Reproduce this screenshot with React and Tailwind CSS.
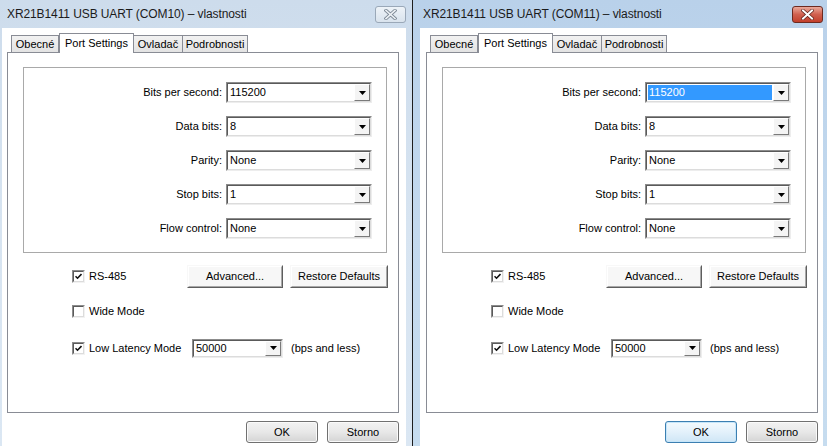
import React from 'react';

const TABS = ['Obecné', 'Port Settings', 'Ovladač', 'Podrobnosti'];
const TAB_W = ['w-[48px]', 'w-[75px]', 'w-[50px]', 'w-[66px]'];

const FIELDS = [
    { label: 'Bits per second:', value: '115200' },
    { label: 'Data bits:', value: '8' },
    { label: 'Parity:', value: 'None' },
    { label: 'Stop bits:', value: '1' },
    { label: 'Flow control:', value: 'None' },
];

const Checkbox = ({ checked }) => (
    <span className="w-[13px] h-[13px] shrink-0 border border-t-[#8c8c8c] border-l-[#8c8c8c] border-r-[#f2f2f2] border-b-[#f2f2f2] bg-white">
        <span className="flex w-full h-full items-center justify-center border border-t-[#5a5a5a] border-l-[#5a5a5a] border-r-[#dcdcdc] border-b-[#dcdcdc]">
            {checked && (
                <svg width="7" height="7" viewBox="0 0 7 7">
                    <path d="M0.5 3.2 L2.5 5.2 L6.5 1" fill="none" stroke="#111" strokeWidth="1.6" />
                </svg>
            )}
        </span>
    </span>
);

const Combo = ({ value, width, height, selected }) => (
    <div className={`flex ${width} ${height} border border-t-[#8c8c8c] border-l-[#8c8c8c] border-r-[#ededed] border-b-[#ededed] bg-white`}>
        <div className="flex flex-1 border border-t-[#5a5a5a] border-l-[#5a5a5a] border-r-[#dcdcdc] border-b-[#dcdcdc]">
            <div className="flex flex-1 items-center pl-[1px] pr-[1px]">
                <span className={selected ? 'flex-1 bg-[#3399ff] text-white pl-[1px] leading-[15px]' : 'pl-[1px]'}>{value}</span>
            </div>
            <div className="flex w-[16px] items-center justify-center bg-[#f4f4f4] border border-t-white border-l-white border-r-[#7a7a7a] border-b-[#7a7a7a]">
                <svg width="7" height="4" viewBox="0 0 7 4">
                    <path d="M0 0 H7 L3.5 4 Z" fill="#000" />
                </svg>
            </div>
        </div>
    </div>
);

const ClassicButton = ({ children, width }) => (
    <div className={`flex ${width} h-[23px] items-center justify-center bg-[#f7f7f7] border border-t-[#f8f8f8] border-l-[#f8f8f8] border-r-[#5e5e5e] border-b-[#5e5e5e]`}>
        <div className="flex w-full h-full items-center justify-center border border-t-white border-l-white border-r-[#a8a8a8] border-b-[#a8a8a8]">
            {children}
        </div>
    </div>
);

const ThemedButton = ({ children, focused }) => (
    <div
        className={
            focused
                ? 'flex w-[72px] h-[22px] items-center justify-center rounded-[3px] border border-[#3c7fb1] bg-gradient-to-b from-[#f4fafd] via-[#e3f1fb] to-[#cfe6f6] shadow-[inset_0_0_0_1px_#c6e6fa]'
                : 'flex w-[72px] h-[22px] items-center justify-center rounded-[3px] border border-[#707070] bg-gradient-to-b from-[#f2f2f2] via-[#e8e8e8] to-[#d4d4d4] shadow-[inset_0_0_0_1px_#fafafa]'
        }
    >
        {children}
    </div>
);

const CloseButton = ({ active }) =>
    active ? (
        <div className="flex w-[31px] h-[17px] items-center justify-center rounded-[3px] border border-[#6d2a20] bg-gradient-to-b from-[#e9a99b] via-[#d0604f] to-[#c23f2b]">
            <svg width="13" height="11" viewBox="0 0 13 11">
                <path d="M2 1.5 L11 9.5 M11 1.5 L2 9.5" stroke="#5a1e16" strokeWidth="3.4" strokeLinecap="square" />
                <path d="M2 1.5 L11 9.5 M11 1.5 L2 9.5" stroke="#fff" strokeWidth="2" strokeLinecap="square" />
            </svg>
        </div>
    ) : (
        <div className="flex w-[31px] h-[17px] items-center justify-center rounded-[3px] border border-[#9aa8b8] bg-gradient-to-b from-[#eef3f8] to-[#d9e3ed]">
            <svg width="13" height="11" viewBox="0 0 13 11">
                <path d="M2 1.5 L11 9.5 M11 1.5 L2 9.5" stroke="#7e8a96" strokeWidth="3.4" strokeLinecap="square" />
                <path d="M2 1.5 L11 9.5 M11 1.5 L2 9.5" stroke="#eef2f6" strokeWidth="1.6" strokeLinecap="square" />
            </svg>
        </div>
    );

const PropertiesDialog = ({ port, active, outer, titlePad, panelGap, closeGap }) => (
    <div className={`flex flex-col h-[446px] shrink-0 ${outer}`}>
        <div className={`flex h-[28px] items-center shrink-0 ${titlePad}`}>
            <span className="text-[12px] text-[#1b1b1b] font-['Liberation_Sans',Arial,sans-serif] tracking-[-0.1px]">
                XR21B1411 USB UART ({port}) – vlastnosti
            </span>
            <div className={`ml-auto ${closeGap}`}>
                <CloseButton active={active} />
            </div>
        </div>

        <div className="flex flex-col flex-1 bg-white font-['Liberation_Sans',Arial,sans-serif] text-[11px] text-black">
            <div className={`flex flex-col w-[392px] ${panelGap}`}>
                {/* tab strip */}
                <div className="flex items-end h-[24px] pl-[4px]">
                    {TABS.map((name, i) => {
                        const sel = i === 1;
                        return (
                            <div
                                key={name}
                                className={
                                    sel
                                        ? `flex ${TAB_W[i]} h-[20px] -mb-px z-10 items-center justify-center bg-white border border-b-0 border-[#898c95]`
                                        : `flex ${TAB_W[i]} h-[17px] items-center justify-center bg-gradient-to-b from-[#f2f2f2] to-[#e3e3e3] border border-b-0 border-[#898c95] ${i === 0 ? '' : '-ml-px'}`
                                }
                            >
                                {name}
                            </div>
                        );
                    })}
                </div>

                {/* tab page */}
                <div className="flex flex-col h-[361px] border border-[#898c95] bg-white">
                    <div className="flex flex-col ml-[15px] mt-[14px] w-[364px] h-[186px] border border-[#a9a9a9] pt-[14px] gap-[13px]">
                        {FIELDS.map((f, i) => (
                            <div key={f.label} className="flex items-center justify-end pr-[14px] gap-[4px]">
                                <span>{f.label}</span>
                                <Combo value={f.value} width="w-[146px]" height="h-[21px]" selected={active && i === 0} />
                            </div>
                        ))}
                    </div>

                    <div className="flex items-center mt-[12px] ml-[64px] h-[23px]">
                        <div className="flex items-center gap-[4px] w-[115px]">
                            <Checkbox checked />
                            <span>RS-485</span>
                        </div>
                        <ClassicButton width="w-[96px]">Advanced...</ClassicButton>
                        <div className="w-[7px]" />
                        <ClassicButton width="w-[98px]">Restore Defaults</ClassicButton>
                    </div>

                    <div className="flex items-center mt-[13px] ml-[64px] h-[20px] gap-[4px]">
                        <Checkbox />
                        <span>Wide Mode</span>
                    </div>

                    <div className="flex items-center mt-[17px] ml-[64px] h-[20px]">
                        <div className="flex items-center gap-[4px] w-[120px]">
                            <Checkbox checked />
                            <span>Low Latency Mode</span>
                        </div>
                        <Combo value="50000" width="w-[91px]" height="h-[19px]" />
                        <span className="ml-[8px]">(bps and less)</span>
                    </div>
                </div>

                <div className="flex justify-end gap-[9px] mt-[8px]">
                    <ThemedButton focused={active}>OK</ThemedButton>
                    <ThemedButton>Storno</ThemedButton>
                </div>
            </div>
        </div>
    </div>
);

export default function App() {
    return (
        <div className="flex w-[827px] h-[446px] overflow-hidden bg-white">
            <PropertiesDialog
                port="COM10"
                outer="w-[412px] pl-[2px] pr-[6px] bg-gradient-to-b from-[#cddcec] via-[#d7e4f1] to-[#dbe7f3]"
                titlePad="pl-[5px]"
                panelGap="ml-[5px]"
                closeGap="mr-[0px]"
            />
            <PropertiesDialog
                port="COM11"
                active
                outer="w-[415px] pl-[7px] pr-[4px] border-l border-[#1e1e1e] bg-gradient-to-b from-[#b9d1ea] via-[#c3d9ee] to-[#c6dcef]"
                titlePad="pl-[3px]"
                panelGap="ml-[6px]"
                closeGap="mr-[0px]"
            />
        </div>
    );
}
